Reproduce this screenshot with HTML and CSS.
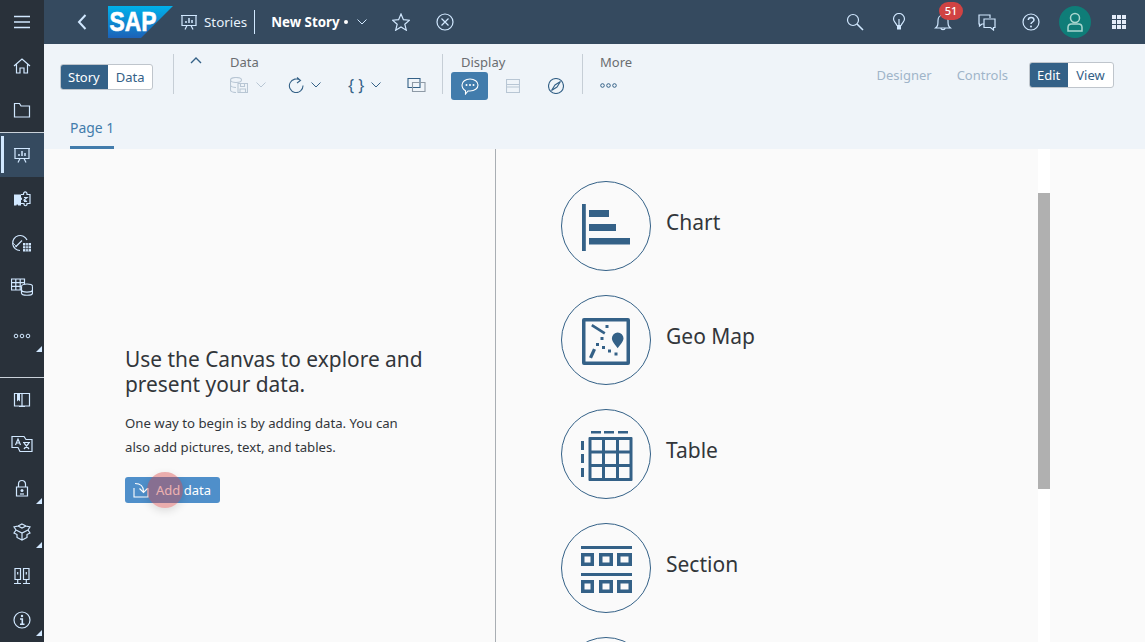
FILE: index.html
```html
<!DOCTYPE html>
<html>
<head lang="en">
    <meta charset="UTF-8">
    <title>New Story</title>
    <link rel="stylesheet" href="styles.css">
</head>
<body>
<div class="app">
    <div class="rail">
        <div class="rail-item"><svg class="ico" viewBox="0 0 18 18"><path d="M1 3.500h16M1 9h16M1 14.500h16" stroke-width="1.600"/></svg></div>
        <div class="rail-item"><svg class="ico" viewBox="0 0 18 18"><path d="M1 9l8-7 8 7M3.500 7.500V16H7v-5h4v5h3.500V7.500"/></svg></div>
        <div class="rail-item"><svg class="ico" viewBox="0 0 18 18"><path d="M1.500 2.500h5l1.500 2.500h8.500v11h-15z"/></svg></div>
        <div class="rail-group">
            <div class="rail-item active"><svg class="ico" viewBox="0 0 18 18"><path d="M1 2.500h16M2 2.500v10h14v-10M5 16.500l2-4M13 16.500l-2-4"/><path d="M6 10V8M9 10V5M12 10V7" stroke-width="1.500"/></svg></div>
            <div class="rail-item"><svg class="ico" viewBox="0 0 18 18"><path d="M8 4.500h2.500c-.5-3.500 4-3.500 3.500 0h3v9h-3c.5 3-3.500 3-3 0H8"/><path class="fill" d="M1 4.500h7v3c1.500-.5 1.500 3 0 2.500v5.500H5c.5-1.500-2-1.500-1.500 0H1z"/><path d="M11 7.500h3l-3 2.500 3 1.500h-3"/></svg></div>
            <div class="rail-item"><svg class="ico ico-wide" viewBox="0 0 20 18"><path d="M8 16.500a7.500 7.500 0 1 1 7-10.500M3.500 13l6.500-6.500"/><path d="M1 9l4 4" stroke-width=".8"/><path class="fill" d="M11 9h8v8.500h-8z"/><path d="M13.700 9v8.500M16.300 9v8.500M11 11.800h8M11 14.600h8" stroke="#29313a" stroke-width=".7"/></svg></div>
            <div class="rail-item"><svg class="ico ico-wide" viewBox="0 0 22 18"><path d="M.5 1h13v11H.5zM.5 4.700h13M.5 8.300h13M4.800 1v11M9.200 1v11" fill="#29313a"/><ellipse cx="16" cy="8.500" rx="5.500" ry="2.500" fill="#29313a"/><path d="M10.500 8.500v6.500c0 3 11 3 11 0V8.500M10.500 11.800c0 3 11 3 11 0" fill="#29313a"/></svg></div>
            <div class="rail-item rail-more corner"><svg class="ico" viewBox="0 0 18 18"><circle cx="3" cy="9" r="1.800"/><circle cx="9" cy="9" r="1.800"/><circle cx="15" cy="9" r="1.800"/></svg></div>
        </div>
        <div class="rail-spacer"></div>
        <div class="rail-group rail-bottom">
            <div class="rail-item"><svg class="ico" viewBox="0 0 18 18"><path d="M1.500 2.500h15v12.500h-15zM9 2.500v12.500M6 15.500h6"/><path class="fill" d="M4 2.500h3v8l-1.500-1.500-1.500 1.500z"/></svg></div>
            <div class="rail-item"><svg class="ico ico-wide" viewBox="0 0 22 18"><path d="M1 1.500h12l2 3h6v12H9l-2-4H1z"/><path d="M4.500 10l2.500-6 2.500 6M5.500 8h3.500M12 7.500h7M13 8l5 6M18 8l-5 6"/></svg></div>
            <div class="rail-item corner"><svg class="ico" viewBox="0 0 18 18"><path d="M3.500 8h11v9h-11zM5.500 8V5a3.500 3.500 0 0 1 7 0v3"/><circle class="fill" cx="9" cy="11.500" r="1.500"/><path d="M7 15h4"/></svg></div>
            <div class="rail-item corner"><svg class="ico" viewBox="0 0 18 18"><path d="M9 1l4 2 4 1-2 3 2 3-3 1.500v3L9 17l-5-2.500v-3L1 10l2-3-2-3 4-1zM3 7l6 3 6-3M9 10v7M5 3l4 2 4-2"/></svg></div>
            <div class="rail-item"><svg class="ico" viewBox="0 0 18 18"><path d="M2 1.500h5.500v11H2zM10.500 1.500H16v11h-5.500zM4.700 12.500v4M13.300 12.500v4M1 16.500h7M10 16.500h7M4.700 5v2.500M13.300 5v2.500"/></svg></div>
            <div class="rail-item corner"><svg class="ico" viewBox="0 0 18 18"><circle cx="9" cy="9" r="8"/><circle class="fill" cx="9" cy="5" r="1.200"/><path d="M7 8h2.300v5M7 13.300h4.500" stroke-width="1.600"/></svg></div>
        </div>
    </div>

    <div class="page">
        <div class="shell">
            <svg class="back" viewBox="0 0 12 18"><path d="M9.500 2L3 9l6.500 7"/></svg>
            <svg class="sap-logo" viewBox="0 0 65 32">
                <defs><linearGradient id="sapfill" x1="0" y1="0" x2="0" y2="1"><stop offset="0" stop-color="#00b1eb"/><stop offset="1" stop-color="#1c62b8"/></linearGradient></defs>
                <path d="M0 0h65L33 32H0z" fill="url(#sapfill)"/>
                <text x="1.500" y="25" class="sap-text" textLength="47" lengthAdjust="spacingAndGlyphs">SAP</text>
            </svg>
            <svg class="ico stories-ico" viewBox="0 0 18 18"><path d="M1 2.500h16M2 2.500v10h14v-10M5 16.500l2-4M13 16.500l-2-4"/><path d="M6 10V8M9 10V5M12 10V7" stroke-width="1.500"/></svg>
            <span class="stories">Stories</span>
            <span class="shell-sep"></span>
            <span class="story-name">New Story</span>
            <span class="story-dot"></span>
            <svg class="chev chev-light" viewBox="0 0 10 6"><path d="M.5.500L5 5 9.500.500"/></svg>
            <svg class="ico star" viewBox="0 0 18 18"><path d="M9 1l2.400 5.700 6.100.5-4.700 4 1.500 6L9 14l-5.300 3.200 1.500-6-4.700-4 6.100-.5z"/></svg>
            <svg class="ico cancel" viewBox="0 0 18 18"><circle cx="9" cy="9" r="8"/><path d="M5.500 5.500l7 7M12.500 5.500l-7 7"/></svg>
            <div class="shell-right">
                <div class="shell-btn"><svg class="ico" viewBox="0 0 18 18"><circle cx="7" cy="7" r="5.500"/><path d="M11 11l6 6" stroke-width="1.600"/></svg></div>
                <div class="shell-btn"><svg class="ico" viewBox="0 0 18 18"><path d="M7 12.500C5.500 9.500 3.500 8.500 3.500 6a5.500 5.500 0 0 1 11 0c0 2.500-2 3.500-3.500 6.500z"/><path class="fill" d="M7 13h4v3.500H7z"/><path d="M9 6v6"/></svg></div>
                <div class="shell-btn">
                    <svg class="ico" viewBox="0 0 18 18"><path d="M1.500 15c2.500-2 2.500-3.500 2.500-7.500 0-3 2-5.500 5-5.500s5 2.500 5 5.500c0 4 0 5.500 2.500 7.500zM7 15.500c0 1.500 4 1.500 4 0"/></svg>
                    <span class="badge">51</span>
                </div>
                <div class="shell-btn"><svg class="ico" viewBox="0 0 18 18"><path d="M6 11H4l-2.500 2v-2H1V2h11v3"/><path d="M6 6h11v8.500h-1.500V17l-3-2.500H6z"/></svg></div>
                <div class="shell-btn"><svg class="ico" viewBox="0 0 18 18"><circle cx="9" cy="9" r="8"/><path d="M6.300 7c0-3.500 5.700-3.500 5.700 0 0 2-3 2-3 4" stroke-width="1.500"/><circle class="fill" cx="9" cy="13.500" r="1"/></svg></div>
                <div class="shell-btn">
                    <div class="avatar"><svg class="ico avatar-ico" viewBox="0 0 18 20"><circle cx="9" cy="6" r="4.500"/><path d="M2 19v-3.500c0-2 1.500-3.500 3.500-3.500h7c2 0 3.500 1.500 3.500 3.500V19z"/></svg></div>
                </div>
                <div class="shell-btn"><div class="waffle"><i></i><i></i><i></i><i></i><i></i><i></i><i></i><i></i><i></i></div></div>
            </div>
        </div>

        <div class="subheader">
            <div class="toolbar">
                <div class="segment seg-story"><span class="seg on">Story</span><span class="seg">Data</span></div>
                <span class="tool-sep sep-first"></span>
                <svg class="collapse" viewBox="0 0 12 7"><path d="M1 6l5-5 5 5"/></svg>
                <div class="tool-group group-data">
                    <div class="tool-label">Data</div>
                    <div class="tool-row">
                        <svg class="tool-ico dim" viewBox="0 0 18 16"><ellipse cx="6" cy="3" rx="5.500" ry="2.500"/><path d="M.5 3v10c0 1.500 3 2.500 5.500 2.500M.5 8c0 1.500 3 2.500 5.500 2.500M8 6.500h9.500v9H8zM10.500 6.500v3h4v-3M10 15.500v-3.500h5.500v3.500"/></svg>
                        <svg class="chev dim w-db" viewBox="0 0 10 6"><path d="M.5.500L5 5 9.500.500"/></svg>
                        <svg class="tool-ico w-refresh" viewBox="0 0 16 16"><path d="M12.500 3.500A6.800 6.800 0 1 0 15 8.500M9 .5l3.500 3-3.500 2.500"/></svg>
                        <svg class="chev w-chev" viewBox="0 0 10 6"><path d="M.5.500L5 5 9.500.500"/></svg>
                        <span class="braces">{ }</span>
                        <svg class="chev w-chev2" viewBox="0 0 10 6"><path d="M.5.500L5 5 9.500.500"/></svg>
                        <svg class="tool-ico wide w-copy" viewBox="0 0 18 14"><path d="M.5.500h12v9H.5z"/><path class="soft" d="M5 4.500h12.500v9H5z"/></svg>
                    </div>
                </div>
                <span class="tool-sep sep-display"></span>
                <div class="tool-group group-display">
                    <div class="tool-label">Display</div>
                    <div class="tool-row row-display">
                        <div class="display-on"><svg class="tool-ico" viewBox="0 0 18 17"><path d="M9 1c4.500 0 8 2.500 8 6s-3.500 6-8 6H7l-2.500 3v-3.300C2.500 11.500 1 9.500 1 7c0-3.500 3.500-6 8-6z"/><circle class="fill" cx="5.500" cy="7" r="1"/><circle class="fill" cx="9" cy="7" r="1"/><circle class="fill" cx="12.500" cy="7" r="1"/></svg></div>
                        <svg class="tool-ico dim w-panel" viewBox="0 0 14 14"><path d="M.5.500h13v13H.5zM.5 5.500h13M.5 8h13"/></svg>
                        <svg class="tool-ico w-compass" viewBox="0 0 16 16"><circle cx="8" cy="8" r="7.500"/><path d="M3.500 12.500L7 7l5.500-3.500L9 9z"/></svg>
                    </div>
                </div>
                <span class="tool-sep sep-more"></span>
                <div class="tool-group group-more">
                    <div class="tool-label">More</div>
                    <div class="tool-row"><svg class="more-dots" viewBox="0 0 17 5"><circle cx="2.500" cy="2.500" r="1.800"/><circle cx="8.500" cy="2.500" r="1.800"/><circle cx="14.500" cy="2.500" r="1.800"/></svg></div>
                </div>
                <div class="tool-right">
                    <span class="tool-link">Designer</span>
                    <span class="tool-link">Controls</span>
                    <div class="segment seg-mode"><span class="seg on">Edit</span><span class="seg">View</span></div>
                </div>
            </div>
            <div class="tabs"><span class="tab">Page 1</span></div>
        </div>

        <div class="main">
            <div class="intro">
                <h1>Use the Canvas to explore and present your data.</h1>
                <p>One way to begin is by adding data. You can also add pictures, text, and tables.</p>
                <div class="add-btn">
                    <svg class="add-ico" viewBox="0 0 16 16"><path d="M1 6v9h14V6M2 1.500c5 0 8.500 2.500 8.500 8M6.500 6.500l4 4 4-4"/></svg>
                    Add data
                    <span class="click-mark"></span>
                </div>
            </div>
            <div class="options">
                <div class="option">
                    <div class="circle"><svg viewBox="0 0 48 48"><path d="M0 2h3.800v47H0zM7 8h20v7H7zM7 22h27v7H7zM7 36h41v6.500H7z"/></svg></div>
                    <span>Chart</span>
                </div>
                <div class="option">
                    <div class="circle"><svg viewBox="0 0 48 48"><path fill-rule="evenodd" d="M2 2h44a2 2 0 0 1 2 2v43a2 2 0 0 1-2 2H2a2 2 0 0 1-2-2V4a2 2 0 0 1 2-2zm1.500 3.500v40h41v-40z"/><path d="M10.500 8l13 8.200-1.400 2.200-13-8.200zM23.500 9h3v3h-3zM18.500 21h3v3h-3zM14 27h3v3h-3zM20 30h3v3h-3zM26 33.500h3v3h-3zM32.500 36.500h3v3h-3zM11 32.500l3 1.300-4 8.700-3-1.300zM35.700 16.500a5.800 5.800 0 0 1 5.800 5.800c0 3.500-3.500 6.500-5.800 10-2.300-3.500-5.800-6.500-5.800-10a5.800 5.800 0 0 1 5.800-5.800z"/></svg></div>
                    <span>Geo Map</span>
                </div>
                <div class="option">
                    <div class="circle"><svg viewBox="0 0 48 48"><path d="M9 1h10v2.600H9zM22 1h10v2.600H22zM36 1h10v2.600H36zM-1 11h3v9h-3zM-1 24h3v9h-3zM-1 38h3v9h-3z"/><path fill-rule="evenodd" d="M7.500 7h42a1 1 0 0 1 1 1v42a1 1 0 0 1-1 1h-42a1 1 0 0 1-1-1V8a1 1 0 0 1 1-1zm2 3v10.500h10.500V10zm13.500 0v10.500h11V10zm14 0v10.500h10.500V10zM9.500 23.500V34h10.500V23.500zm13.500 0V34h11V23.500zm14 0V34h10.500V23.500zM9.500 37v11h10.500V37zM23 37v11h11V37zm14 0v11h10.500V37z"/></svg></div>
                    <span>Table</span>
                </div>
                <div class="option">
                    <div class="circle"><svg viewBox="0 0 48 48"><path fill-rule="evenodd" d="M-1 2h51v3H-1zM-1 9h13v13H-1zm3.500 3.500v6h6v-6zM17 9h14v13H17zm3.500 3.500v6h7v-6zM35 9h15v13H35zm3.500 3.500v6h8v-6zM-1 29h51v3H-1zM-1 36h13v13H-1zm3.500 3.500v6h6v-6zM17 36h14v13H17zm3.500 3.500v6h7v-6zM35 36h15v13H35zm3.500 3.500v6h8v-6z"/></svg></div>
                    <span>Section</span>
                </div>
                <div class="option"><div class="circle"></div></div>
            </div>
            <div class="scrollbar"><div class="thumb"></div></div>
            <div class="main-end"></div>
        </div>
    </div>
</div>
</body>
</html>
```

FILE: styles.css
```css
*{
    padding: 0;
    margin: 0;
    box-sizing: border-box;
}
html,body{
    height: 100%;
    overflow: hidden;
}
body{
    font-family: "Noto Sans", "Open Sans", sans-serif;
    color: #32363a;
    background: #fafafa;
}
.app{
    display: flex;
    width: 1145px;
    height: 642px;
    overflow: hidden;
}
svg{
    display: block;
    flex: none;
}
.ico{
    width: 18px;
    height: 18px;
    fill: none;
    stroke: #d1e8ff;
    stroke-width: 1.2;
}
.ico-wide{
    width: 22px;
}
.ico .fill{
    fill: #d1e8ff;
    stroke: none;
}

/* left rail */
.rail{
    width: 44px;
    flex: none;
    display: flex;
    flex-direction: column;
    background: #29313a;
}
.rail-item{
    height: 44px;
    display: flex;
    align-items: center;
    justify-content: center;
    position: relative;
}
.rail-group{
    border-top: 1px solid #c9d1d9;
}
.rail-item.active{
    background: #354a5f;
}
.rail-item.active:before{
    content: "";
    position: absolute;
    left: 1px;
    top: 3px;
    width: 3px;
    height: 37px;
    background: #d1e8ff;
}
.rail-more{
    margin-top: 5px;
}
.rail-spacer{
    flex: 1;
}
.rail-bottom{
    height: 265px;
}
.corner:after{
    content: "";
    position: absolute;
    right: 2px;
    bottom: 6px;
    width: 0;
    height: 0;
    border-left: 6px solid transparent;
    border-bottom: 6px solid #d1e8ff;
}
.rail-more .ico circle{
    stroke-width: 1;
}

/* shell bar */
.page{
    flex: 1;
    display: flex;
    flex-direction: column;
    min-width: 0;
}
.shell{
    height: 44px;
    flex: none;
    display: flex;
    align-items: center;
    background: #354a5f;
    color: #fff;
    padding-left: 32px;
}
.back{
    width: 12px;
    height: 18px;
    fill: none;
    stroke: #d1e8ff;
    stroke-width: 2;
}
.sap-logo{
    width: 65px;
    height: 32px;
    margin-left: 20px;
    margin-top: -1px;
}
.sap-text{
    font-family: "Liberation Sans", sans-serif;
    font-weight: 700;
    font-size: 27px;
    fill: #fff;
    stroke: #fff;
    stroke-width: .6;
}
.stories-ico{
    margin-left: 7px;
}
.stories{
    margin: -1px 0 0 6px;
    font-size: 13.4px;
    color: #e8f2fc;
}
.shell-sep{
    width: 1px;
    height: 24px;
    background: #d1e8ff;
    margin-left: 7px;
}
.story-name{
    margin: -1px 0 0 16px;
    font-size: 13.3px;
    font-weight: 700;
}
.story-dot{
    width: 4px;
    height: 4px;
    margin-left: 4px;
    border-radius: 50%;
    background: #fff;
}
.chev{
    width: 10px;
    height: 6px;
    fill: none;
    stroke: #346187;
    stroke-width: 1;
}
.chev-light{
    stroke: #d1e8ff;
    margin-left: 9px;
}
.star{
    margin-left: 25px;
}
.cancel{
    margin-left: 26px;
}
.shell-right{
    margin-left: auto;
    display: flex;
    padding-right: 4px;
}
.shell-btn{
    width: 44px;
    height: 44px;
    display: flex;
    align-items: center;
    justify-content: center;
    position: relative;
}
.badge{
    position: absolute;
    left: 18px;
    top: 2px;
    width: 24px;
    height: 18px;
    border-radius: 9px;
    background: #d04343;
    color: #fff;
    font-size: 11px;
    font-weight: 500;
    line-height: 18px;
    text-align: center;
}
.avatar{
    width: 32px;
    height: 32px;
    border-radius: 50%;
    background: #0f7d78;
    display: flex;
    align-items: center;
    justify-content: center;
}
.avatar-ico{
    height: 20px;
    stroke: #a9d6cf;
    stroke-width: 1.5;
}
.waffle{
    display: grid;
    grid-template-columns: repeat(3, 4px);
    grid-auto-rows: 4px;
    gap: 1px;
}
.waffle i{
    background: #e4ecf8;
}

/* sub header */
.subheader{
    height: 105px;
    flex: none;
    background: #eff4f9;
}
.toolbar{
    height: 61px;
    display: flex;
    align-items: flex-start;
    padding: 10px 31px 0 16px;
}
.segment{
    display: flex;
    height: 26px;
    font-size: 13px;
    line-height: 24px;
    border: 1px solid #bfc5cc;
    border-radius: 3px;
    background: #fff;
    color: #346187;
    overflow: hidden;
}
.seg{
    padding: 0 8px;
}
.seg.on{
    margin: -1px 0 -1px -1px;
    padding: 1px 8px;
    background: #346187;
    color: #fff;
}
.seg-story{
    margin-top: 10px;
    width: 93px;
}
.tool-sep{
    width: 1px;
    height: 40px;
    background: #c6ced6;
    flex: none;
}
.sep-first{
    margin-left: 20px;
}
.collapse{
    width: 12px;
    height: 7px;
    margin: 3px 0 0 16px;
    fill: none;
    stroke: #346187;
    stroke-width: 1.4;
}
.tool-group{
    display: flex;
    flex-direction: column;
}
.group-data{
    margin-left: 28px;
    width: 212px;
}
.group-display{
    margin-left: 8px;
    width: 131px;
}
.group-more{
    margin-left: 17px;
}
.tool-label{
    height: 16px;
    font-size: 13px;
    line-height: 16px;
    color: #6a6d70;
}
.group-display .tool-label{
    margin-left: 10px;
}
.tool-row{
    height: 30px;
    display: flex;
    align-items: center;
}
.tool-ico{
    width: 16px;
    height: 16px;
    fill: none;
    stroke: #346187;
    stroke-width: 1.100;
}
.tool-ico.dim{
    width: 18px;
    stroke: #b8c6d4;
}
.tool-ico.wide{
    width: 19px;
    height: 14px;
}
.soft{
    stroke: #8e9aa6;
}
.chev.dim{
    stroke: #b8c6d4;
}
.w-db{
    margin-left: 8px;
}
.w-refresh{
    margin-left: 22px;
}
.w-chev{
    margin-left: 7px;
}
.braces{
    margin-left: 27px;
    width: 16px;
    font-size: 16px;
    color: #346187;
    text-align: center;
    white-space: nowrap;
}
.w-chev2{
    margin-left: 7px;
}
.w-copy{
    margin-left: 26px;
}
.row-display{
    margin-top: 1px;
}
.display-on{
    width: 37px;
    height: 28px;
    border-radius: 3px;
    background: #427cac;
    display: flex;
    align-items: center;
    justify-content: center;
}
.display-on .tool-ico{
    width: 18px;
    height: 17px;
    stroke: #fff;
}
.display-on .fill{
    fill: #fff;
    stroke: none;
}
.tool-ico.w-panel{
    width: 14px;
    height: 14px;
    margin-left: 18px;
}
.w-compass{
    margin-left: 28px;
}
.more-dots{
    width: 17px;
    height: 5px;
    fill: none;
    stroke: #346187;
    stroke-width: 1;
}
.tool-right{
    margin-left: auto;
    display: flex;
    align-items: center;
    height: 26px;
    margin-top: 8px;
}
.tool-link{
    font-size: 13px;
    color: #9fb4c9;
    margin-right: 25px;
}
.tool-link + .tool-link{
    margin-right: 21px;
}
.seg-mode{
    width: 85px;
}
.tabs{
    height: 44px;
    padding-left: 26px;
}
.tab{
    display: inline-block;
    height: 44px;
    padding-top: 13px;
    font-size: 13.9px;
    line-height: 20px;
    color: #427cac;
    border-bottom: 3px solid #427cac;
}

/* canvas */
.main{
    flex: 1;
    display: flex;
    min-height: 0;
    background: #fafafa;
}
.intro{
    width: 452px;
    flex: none;
    padding: 198px 0 0 81px;
    border-right: 1px solid #a9aeb3;
}
.intro h1{
    width: 320px;
    font-size: 20.9px;
    font-weight: 400;
    line-height: 25px;
}
.intro p{
    width: 290px;
    margin-top: 14px;
    font-size: 13.2px;
    line-height: 24px;
}
.add-btn{
    width: 95px;
    height: 26px;
    margin-top: 18px;
    display: flex;
    align-items: center;
    position: relative;
    padding-left: 8px;
    gap: 7px;
    border-radius: 3px;
    background: #4f8fca;
    color: #fff;
    font-size: 13px;
}
.add-ico{
    width: 16px;
    height: 16px;
    fill: none;
    stroke: #fff;
    stroke-width: 1.100;
}
.click-mark{
    position: absolute;
    left: 22px;
    top: -5px;
    width: 36px;
    height: 36px;
    border-radius: 50%;
    background: rgba(214, 66, 66, .42);
    box-shadow: 0 3px 8px rgba(0, 0, 0, .12);
}
.options{
    width: 542px;
    flex: none;
    padding: 32px 0 0 65px;
    overflow: hidden;
}
.option{
    display: flex;
    align-items: center;
    gap: 15px;
    height: 90px;
    margin-bottom: 24px;
    font-size: 21px;
}
.option span{
    margin-top: -8px;
}
.circle{
    width: 90px;
    height: 90px;
    flex: none;
    border: 1px solid #346187;
    border-radius: 50%;
    display: flex;
    align-items: center;
    justify-content: center;
}
.circle svg{
    width: 48px;
    height: 48px;
    fill: #346187;
    overflow: visible;
}
.scrollbar{
    width: 12px;
    flex: none;
    background: #fff;
}
.thumb{
    height: 296px;
    margin-top: 44px;
    background: #b0b0b0;
}
.main-end{
    flex: 1;
}
```
